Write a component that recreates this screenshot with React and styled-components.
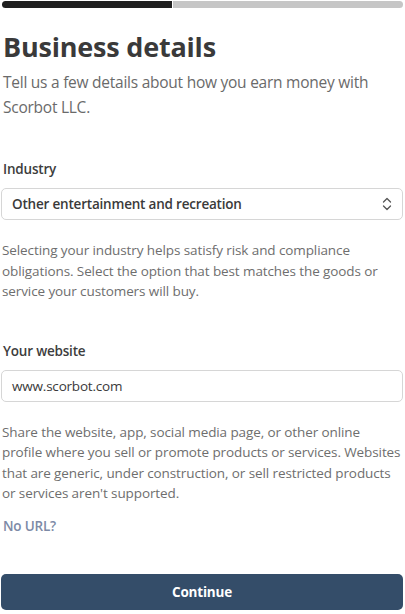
import React from "react";
import styled, { createGlobalStyle } from "styled-components";

const Global = createGlobalStyle`
  html, body { margin: 0; padding: 0; background: #fff; }
  body { font-family: "Open Sans", "Noto Sans", Arial, sans-serif; color: #3d3d3d; }
  * { box-sizing: border-box; }
`;

const Page = styled.div`
  width: 405px;
  height: 614px;
  padding: 1px 2px 4px 1px;
  display: flex;
  flex-direction: column;
`;

const Progress = styled.div`
  display: flex;
  gap: 1px;
  height: 7px;
  margin-left: 1px;
`;

const Segment = styled.div`
  flex: ${(p) => p.$grow};
  background: ${(p) => (p.$done ? "#1f1f1f" : "#c6c6c6")};
  border-radius: ${(p) => (p.$done ? "4px 0 0 4px" : "0 4px 4px 0")};
`;

const Title = styled.h1`
  margin: 24px 0 0 2px;
  font-size: 27px;
  font-weight: 700;
  color: #3a3a3a;
  line-height: 30px;
  letter-spacing: -0.2px;
`;

const Subtitle = styled.p`
  margin: 8px 0 0 2px;
  font-size: 15.5px;
  line-height: 25px;
  color: #6a6a6a;
  letter-spacing: -0.25px;
`;

const Field = styled.div`
  display: flex;
  flex-direction: column;
  margin-top: ${(p) => p.$top}px;
`;

const Label = styled.label`
  font-size: 13.5px;
  font-weight: 600;
  color: #3d3d3d;
  line-height: 20px;
  margin-left: 2px;
  letter-spacing: -0.2px;
`;

const Box = styled.div`
  margin-top: ${(p) => p.$gap}px;
  height: 32px;
  border: 1px solid #d6d6d6;
  border-radius: 5px;
  display: flex;
  align-items: center;
  justify-content: space-between;
  padding: 0 10px 0 10px;
  font-size: 13.5px;
  letter-spacing: -0.2px;
  font-weight: ${(p) => (p.$bold ? 600 : 400)};
  color: #3a3a3a;
`;

const Help = styled.p`
  margin: 20px 0 0 1px;
  font-size: 13.5px;
  line-height: 20.5px;
  color: #6e6e6e;
  letter-spacing: -0.1px;
`;

const Link = styled.a`
  margin: 13px 0 0 2px;
  font-size: 13.5px;
  font-weight: 600;
  color: #7d8aa6;
  text-decoration: none;
  letter-spacing: -0.2px;
`;

const Spacer = styled.div`
  flex: 1;
`;

const Button = styled.button`
  height: 36px;
  width: 402px;
  border: none;
  border-radius: 5px;
  background: #344d69;
  color: #fff;
  font-family: inherit;
  font-size: 13.5px;
  font-weight: 700;
  letter-spacing: -0.2px;
`;

const Chevron = () => (
  <svg width="10" height="14" viewBox="0 0 10 14" fill="none" stroke="#555" strokeWidth="1.3" strokeLinecap="round" strokeLinejoin="round">
    <path d="M1.5 5 L5 1.5 L8.5 5" />
    <path d="M1.5 9 L5 12.5 L8.5 9" />
  </svg>
);

export default function App() {
  return (
    <>
      <Global />
      <Page>
        <Progress>
          <Segment $done $grow={170} />
          <Segment $grow={230} />
        </Progress>
        <Title>Business details</Title>
        <Subtitle>Tell us a few details about how you earn money with Scorbot LLC.</Subtitle>
        <Field $top={39}>
          <Label>Industry</Label>
          <Box $bold $gap={9}>
            <span>Other entertainment and recreation</span>
            <Chevron />
          </Box>
        </Field>
        <Help>
          Selecting your industry helps satisfy risk and compliance obligations. Select the option that best matches the goods or service your customers will buy.
        </Help>
        <Field $top={39}>
          <Label>Your website</Label>
          <Box $gap={9}>www.scorbot.com</Box>
        </Field>
        <Help>
          Share the website, app, social media page, or other online profile where you sell or promote products or services. Websites that are generic, under construction, or sell restricted products or services aren't supported.
        </Help>
        <Link href="#">No URL?</Link>
        <Spacer />
        <Button>Continue</Button>
      </Page>
    </>
  );
}
